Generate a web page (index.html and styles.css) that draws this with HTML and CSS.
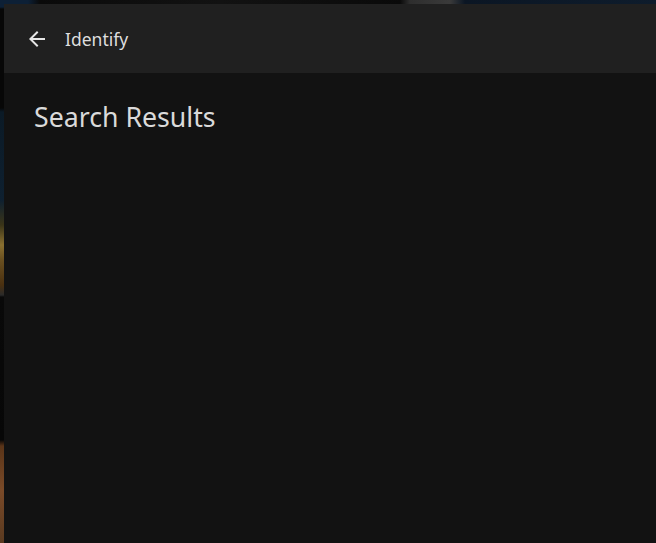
FILE: index.html
```html
<!DOCTYPE html>
<html lang="en">
<head>
<meta charset="utf-8">
<title>Identify</title>
<link rel="stylesheet" href="styles.css">
</head>
<body>
<div class="dialog">
  <header class="dialog-header">
    <button class="back-btn" aria-label="Back">
      <svg width="24" height="24" viewBox="0 0 24 24"><path d="M20 11H7.83l5.59-5.59L12 4l-8 8 8 8 1.41-1.41L7.83 13H20v-2z" fill="currentColor"/></svg>
    </button>
    <h3 class="dialog-title">Identify</h3>
  </header>
  <div class="dialog-content">
    <h1 class="section-title">Search Results</h1>
  </div>
</div>
</body>
</html>
```
FILE: styles.css
```css
html, body {
  margin: 0;
  height: 100%;
}
body {
  box-sizing: border-box;
  padding: 4px 0 0 4px;
  overflow: hidden;
  font-family: "Noto Sans", "Open Sans", sans-serif;
  background:
    linear-gradient(to right, #0d2036 0, #0d2036 28px, #0a0a0a 40px, #121212 220px, #0a0a0a 400px, #2e2e2e 410px, #3a3a3a 450px, #0b1624 465px, #0e1c2c 656px) top left / 100% 4px no-repeat,
    linear-gradient(to bottom, #0d2036 0, #0d2036 7px, #070707 9px, #070707 108px, #0b1a26 112px, #0e2030 200px, #3a3418 225px, #8a7030 245px, #6a5020 260px, #4a3010 285px, #2a2a2a 295px, #090909 297px, #070707 440px, #5a3418 446px, #7a4a28 490px, #5a3a20 543px) top left / 4px 100% no-repeat,
    #070707;
}
.dialog {
  height: 100%;
  background: #121212;
  color: #dddddd;
  display: flex;
  flex-direction: column;
}
.dialog-header {
  height: 69px;
  flex: none;
  background: #202020;
  display: flex;
  align-items: center;
  padding-left: 21px;
  gap: 16px;
}
.back-btn {
  background: none;
  border: 0;
  padding: 0;
  width: 24px;
  height: 24px;
  color: #e6e6e6;
  display: flex;
}
.dialog-title {
  margin: 0;
  font-size: 17.5px;
  font-weight: 400;
  color: #dedede;
}
.dialog-content {
  padding: 0 30px;
}
.section-title {
  margin: 25px 0 0;
  font-size: 26.7px;
  font-weight: 400;
  color: #dadada;
}
```
